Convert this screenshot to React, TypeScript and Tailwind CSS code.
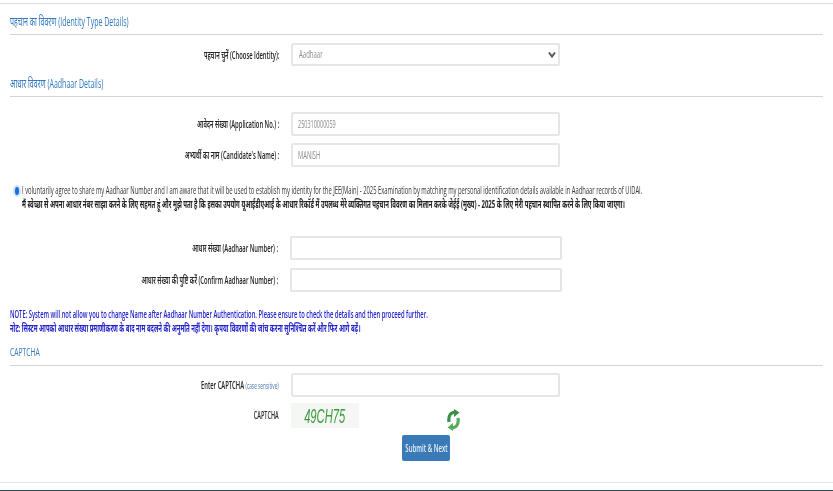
const font = "[font-family:'Open_Sans','Noto_Sans','Noto_Sans_CJK_SC',sans-serif]";

function Heading({ children, className = "" }: { children: React.ReactNode; className?: string }) {
  return (
    <div className={`mx-[10px] border-b border-[#d4d4d4] ${className}`}>
      <span className="block whitespace-nowrap origin-left scale-x-[0.585] text-[12px] leading-[14px] text-[#2f78c0]">{children}</span>
    </div>
  );
}

function Field({ label, value, width = "w-[269px]", mt, select, left = "w-[279px]", gap = "ml-[12px]", h = "h-[24px]", vs = "scale-x-[0.58]", pad = "pl-[5px]" }: { label: React.ReactNode; value?: string; width?: string; mt: string; select?: boolean; left?: string; gap?: string; h?: string; vs?: string; pad?: string }) {
  return (
    <div className={`flex items-center ${mt}`}>
      <div className={`${left} flex justify-end shrink-0`}>
        <span className="whitespace-nowrap origin-right scale-x-[0.53] text-[11px] font-semibold leading-[14px] text-[#222]">{label}</span>
      </div>
      <div className={`${gap} ${width} ${h} bg-white border-2 border-[#e6e6e6] rounded-[2px] flex items-center justify-between ${pad} pr-[2px]`}>
        <span className={`origin-left ${vs} whitespace-nowrap text-[10px] text-[#8a8a8a]`}>{value}</span>
        {select && (
          <svg width="8" height="7" viewBox="0 0 8 7" fill="none" stroke="#555" strokeWidth="2"><path d="M1 1.5 4 5.5 7 1.5" /></svg>
        )}
      </div>
    </div>
  );
}

export default function App() {
  return (
    <div className={`${font} relative w-[833px] h-[491px] bg-white overflow-hidden flex flex-col blur-[0.45px]`}>
      <div className="mt-[3px] h-px bg-[#dcdcdc]" />
      <Heading className="mt-[11px] pb-[5px]">पहचान का विवरण (Identity Type Details)</Heading>
      <Field mt="mt-[8px]" h="h-[23px]" select value="Aadhaar" vs="scale-x-[0.6]" pad="pl-[6px]" label="पहचान चुनें (Choose Identity):" />
      <Heading className="mt-[11px] pb-[5px]">आधार विवरण (Aadhaar Details)</Heading>
      <Field mt="mt-[15px]" value="250310000059" vs="scale-x-[0.55]" label="आवेदन संख्या (Application No.) :" />
      <Field mt="mt-[7px]" value="MANISH" label="अभ्यर्थी का नाम (Candidate's Name) :" />

      <div className="flex mt-[16px] ml-[13px]">
        <span className="mt-[2px] w-[8px] h-[12px] rounded-[50%] bg-[#1a6fe0] border-[2px] border-[#cfe0fb] shrink-0" />
        <div className="ml-[1px] text-[11px] leading-[14px]">
          <div className="whitespace-nowrap origin-left scale-x-[0.53] text-[#333]">I voluntarily agree to share my Aadhaar Number and I am aware that it will be used to establish my identity for the JEE(Main) - 2025 Examination by matching my personal identification details available in Aadhaar records of UIDAI.</div>
          <div className="whitespace-nowrap origin-left scale-x-[0.547] font-bold text-[#222]">मैं स्वेच्छा से अपना आधार नंबर साझा करने के लिए सहमत हूं और मुझे पता है कि इसका उपयोग यूआईडीएआई के आधार रिकॉर्ड में उपलब्ध मेरे व्यक्तिगत पहचान विवरण का मिलान करके जेईई (मुख्य) - 2025 के लिए मेरी पहचान स्थापित करने के लिए किया जाएगा।</div>
        </div>
      </div>

      <Field mt="mt-[25px]" width="w-[272px]" left="w-[278px]" label="आधार संख्या (Aadhaar Number) :" />
      <Field mt="mt-[8px]" width="w-[272px]" left="w-[278px]" label="आधार संख्या की पुष्टि करें (Confirm Aadhaar Number) :" />

      <div className="mt-[15px] ml-[10px] text-[11px] leading-[14px] font-semibold text-[#2222cc]">
        <div className="whitespace-nowrap origin-left scale-x-[0.528]">NOTE: System will not allow you to change Name after Aadhaar Number Authentication. Please ensure to check the details and then proceed further.</div>
        <div className="whitespace-nowrap origin-left scale-x-[0.54] font-bold">नोट: सिस्टम आपको आधार संख्या प्रमाणीकरण के बाद नाम बदलने की अनुमति नहीं देगा। कृपया विवरणों की जांच करना सुनिश्चित करें और फिर आगे बढ़ें।</div>
      </div>

      <Heading className="mt-[10px] pb-[6px]"><span className="text-[11.5px]">CAPTCHA</span></Heading>
      <Field mt="mt-[7px]" width="w-[269px]" label={<>Enter CAPTCHA <span className="text-[9px] font-normal text-[#4a78b0]">(case sensitive)</span></>} />

      <div className="flex mt-[6px] h-[25px]">
        <div className="w-[279px] flex justify-end items-center">
          <span className="origin-right scale-x-[0.5] text-[11px] font-semibold text-[#2b2b2b]">CAPTCHA</span>
        </div>
        <div className="ml-[12px] w-[68px] h-[25px] bg-[#f5f7f5] flex items-center justify-center">
          <span className="[font-family:'Liberation_Sans',sans-serif] italic text-[20px] leading-none scale-x-[0.56] text-[#3d9a3d]">49CH75</span>
        </div>
        <svg className="ml-[88px] mt-[6px] shrink-0" width="13" height="22" viewBox="0 0 13 22" fill="none">
          <path d="M2 13 C1 6 4 3 9 3" stroke="#3c8f46" strokeWidth="3.2" />
          <path d="M11 9 C12 16 9 19 4 19" stroke="#57ab5c" strokeWidth="3.2" />
          <path d="M7 0 12.5 3.5 7 8Z" fill="#3c8f46" />
          <path d="M6 14 0.5 18.5 6 22Z" fill="#57ab5c" />
        </svg>
      </div>

      <div className="flex justify-start mt-[7px] ml-[402px]">
        <button className="w-[48px] h-[26px] bg-[#3a7ab8] rounded-[2px] flex items-center justify-center">
          <span className="whitespace-nowrap scale-x-[0.55] text-[11px] font-semibold text-[#e8eef6]">Submit & Next</span>
        </button>
      </div>

      <div className="mt-[21px] h-[1px] bg-[#e4e4e4]" />
      <div className="absolute left-0 right-0 bottom-0 h-[1px] bg-[#2f4f5f]" />
    </div>
  );
}
